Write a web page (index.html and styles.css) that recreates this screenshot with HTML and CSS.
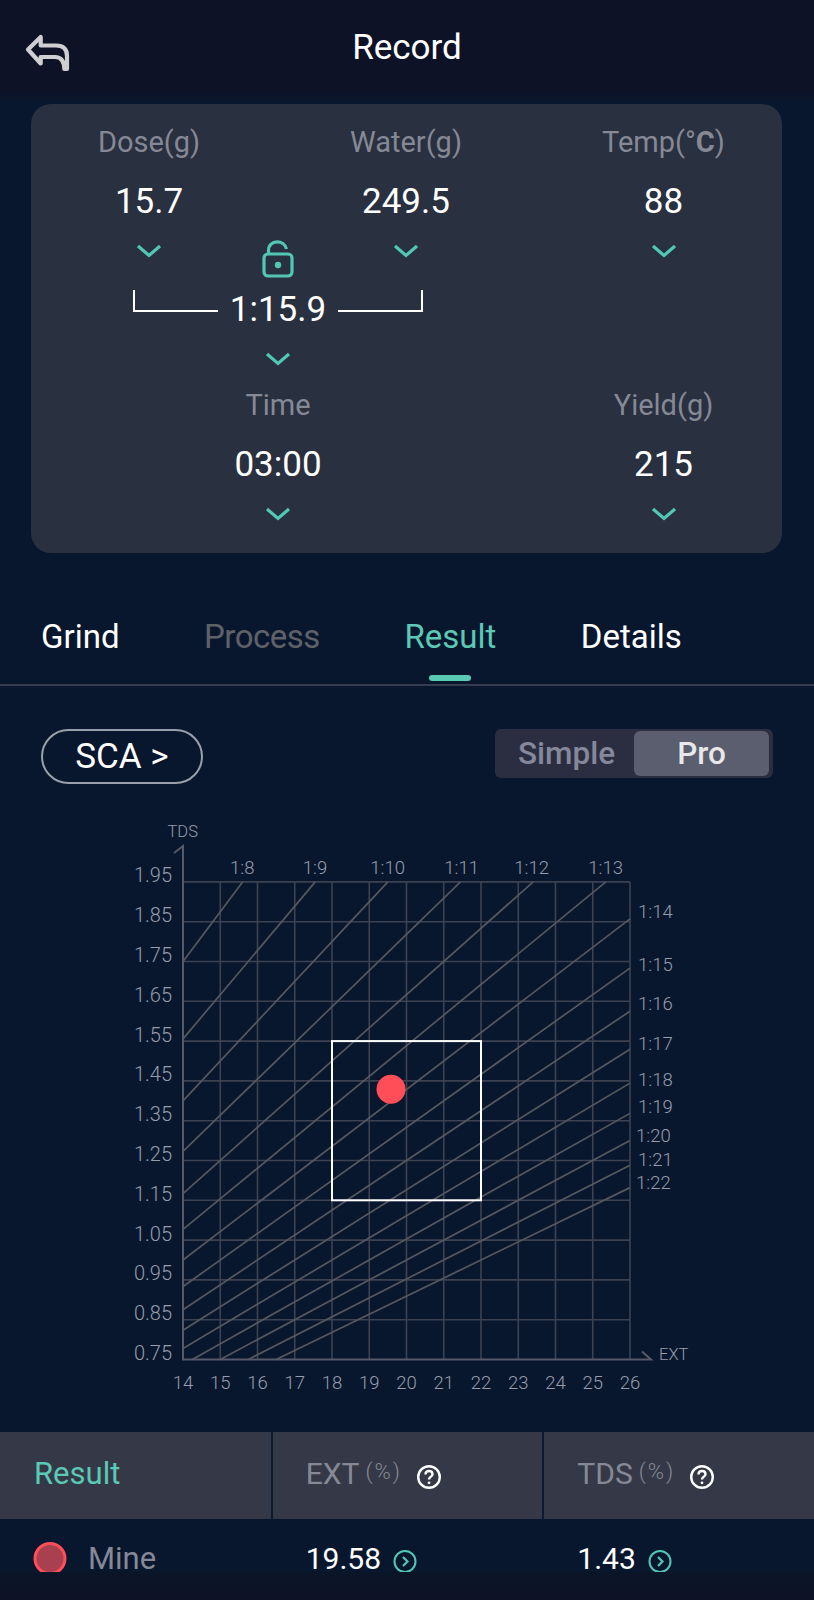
FILE: index.html
```html
<!DOCTYPE html>
<html lang="en">
<head>
  <meta charset="utf-8" />
  <title>Record</title>
  <link rel="stylesheet" href="styles.css">
</head>
<body>
  <header class="topbar">
    <svg class="back" width="50" height="44" viewBox="24 32 50 44">
      <path d="M28 49.500 40.700 37V45.500H56Q67 45.500 67 56V69H64.300Q64 57 55 57H40.700V63.500Z" />
    </svg>
    <h1 class="title">Record</h1>
  </header>

  <section class="card">
    <div class="row row-top">
      <div class="field">
        <div class="label">Dose(g)</div>
        <div class="value">15.7</div>
        <svg class="chev" width="26" height="14" viewBox="0 0 26 14"><path d="M2 2 13 11.5 24 2" /></svg>
      </div>
      <div class="field">
        <div class="label">Water(g)</div>
        <div class="value">249.5</div>
        <svg class="chev" width="26" height="14" viewBox="0 0 26 14"><path d="M2 2 13 11.5 24 2" /></svg>
      </div>
      <div class="field">
        <div class="label">Temp(°<span class="celsius">C</span>)</div>
        <div class="value">88</div>
        <svg class="chev" width="26" height="14" viewBox="0 0 26 14"><path d="M2 2 13 11.5 24 2" /></svg>
      </div>
    </div>

    <div class="ratio">
      <svg class="lock" width="32" height="38" viewBox="0 0 32 38">
        <path d="M6.5 13V10.500C6.500 5 10.500 1.800 15 1.800C19.500 1.800 23.500 4.500 24.500 9" />
        <rect x="2" y="14" width="28" height="22" rx="4" />
        <circle cx="16" cy="25" r="3.200" />
      </svg>
      <div class="bracket">
        <span class="bracket-left"></span>
        <span class="ratio-value">1:15.9</span>
        <span class="bracket-right"></span>
      </div>
      <svg class="chev" width="26" height="14" viewBox="0 0 26 14"><path d="M2 2 13 11.5 24 2" /></svg>
    </div>

    <div class="row row-bottom">
      <div class="field">
        <div class="label">Time</div>
        <div class="value">03:00</div>
        <svg class="chev" width="26" height="14" viewBox="0 0 26 14"><path d="M2 2 13 11.5 24 2" /></svg>
      </div>
      <div class="field">
        <div class="label">Yield(g)</div>
        <div class="value">215</div>
        <svg class="chev" width="26" height="14" viewBox="0 0 26 14"><path d="M2 2 13 11.5 24 2" /></svg>
      </div>
    </div>
  </section>

  <nav class="tabs">
    <a class="tab">Grind</a>
    <a class="tab tab-muted">Process</a>
    <a class="tab tab-active">Result</a>
    <a class="tab">Details</a>
  </nav>

  <div class="controls">
    <button class="sca">SCA &gt;</button>
    <div class="toggle">
      <span class="toggle-item">Simple</span>
      <span class="toggle-item toggle-on">Pro</span>
    </div>
  </div>

  <svg id="chart" class="chart" width="814" height="632" viewBox="0 800 814 632"></svg>

  <div class="result-head">
    <div class="cell cell-first">Result</div>
    <div class="cell">
      <span class="metric">EXT</span><span class="unit">(%)</span>
      <svg class="help" width="26" height="26" viewBox="0 0 26 26">
        <circle cx="13" cy="13" r="10.800" />
        <path d="M9.500 10.500C9.500 8.300 11 7 13 7C15 7 16.500 8.300 16.500 10.200C16.500 12.600 13 12.800 13 15.500" />
        <circle class="dot" cx="13" cy="18.800" r="1.400" />
      </svg>
    </div>
    <div class="cell">
      <span class="metric">TDS</span><span class="unit">(%)</span>
      <svg class="help" width="26" height="26" viewBox="0 0 26 26">
        <circle cx="13" cy="13" r="10.800" />
        <path d="M9.500 10.500C9.500 8.300 11 7 13 7C15 7 16.500 8.300 16.500 10.200C16.500 12.600 13 12.800 13 15.500" />
        <circle class="dot" cx="13" cy="18.800" r="1.400" />
      </svg>
    </div>
  </div>

  <div class="result-row">
    <div class="cell-row cell-first">
      <svg class="swatch" width="34" height="30" viewBox="0 0 34 30"><circle cx="17" cy="16.500" r="15" /></svg>
      <span class="mine">Mine</span>
    </div>
    <div class="cell-row">
      <span class="num">19.58</span>
      <svg class="go" width="24" height="22" viewBox="0 0 24 22"><circle cx="12" cy="11.500" r="10.500" /><path d="M10 7 14.500 11.500 10 16" /></svg>
    </div>
    <div class="cell-row">
      <span class="num">1.43</span>
      <svg class="go" width="24" height="22" viewBox="0 0 24 22"><circle cx="12" cy="11.500" r="10.500" /><path d="M10 7 14.500 11.500 10 16" /></svg>
    </div>
  </div>
  <div class="bottom-fade"></div>

  <script>
    // 차트 좌표: viewBox가 페이지 좌표와 같음
    const svg = document.getElementById('chart');
    const X0 = 183, Y0 = 1359.5, DX = 37.25, DY = 39.8;
    const px = ext => X0 + (ext - 14) * DX;
    const py = tds => Y0 - (tds - 0.75) * 10 * DY;

    function add(tag, attrs, text) {
      const el = document.createElementNS('http://www.w3.org/2000/svg', tag);
      for (const k in attrs) el.setAttribute(k, attrs[k]);
      if (text) el.textContent = text;
      svg.appendChild(el);
    }
    function line(x1, y1, x2, y2, cls) {
      add('line', {x1, y1, x2, y2, class: cls});
    }

    // 격자
    for (let e = 15; e <= 26; e++) line(px(e), py(1.95), px(e), Y0, 'grid');
    for (let i = 1; i <= 12; i++) line(X0, Y0 - i * DY, px(26), Y0 - i * DY, 'grid');

    // 비율선 TDS = EXT / r
    for (let r = 8; r <= 22; r++) {
      let e1 = 14, t1 = e1 / r, e2 = 26, t2 = e2 / r;
      if (t1 < 0.75) { t1 = 0.75; e1 = r * t1; }
      if (t2 > 1.95) { t2 = 1.95; e2 = r * t2; }
      line(px(e1), py(t1), px(e2), py(t2), 'diag');
    }

    // 축
    add('path', {d: `M174 853 183 846V${Y0}H651L642 1351.500`, class: 'axis'});

    // 눈금 글자
    for (let i = 0; i <= 12; i++) {
      add('text', {x: 172, y: Y0 - i * DY + 0.5, class: 'tick tick-y end'}, (0.75 + i * 0.1).toFixed(2));
      add('text', {x: px(14 + i), y: 1388.5, class: 'tick mid'}, String(14 + i));
    }
    [[8, 242.3], [9, 315], [10, 387.7], [11, 461.7], [12, 531.7], [13, 605.7]].forEach(([r, x]) => {
      add('text', {x, y: 873.5, class: 'tick mid'}, '1:' + r);
    });
    [[14, 638, 917.7], [15, 638, 970.7], [16, 638, 1010], [17, 638, 1050], [18, 638, 1085.7],
     [19, 638, 1113.3], [20, 636, 1141.7], [21, 638, 1165.7], [22, 636, 1189.3]].forEach(([r, x, y]) => {
      add('text', {x, y, class: 'tick'}, '1:' + r);
    });
    add('text', {x: 182.7, y: 836.7, class: 'axis-name mid'}, 'TDS');
    add('text', {x: 659, y: 1360, class: 'axis-name'}, 'EXT');

    // SCA 영역과 내 결과
    add('rect', {x: px(18), y: py(1.55), width: DX * 4, height: DY * 4, class: 'sca-box'});
    add('circle', {cx: 391, cy: 1089.3, r: 14.5, class: 'mine-dot'});
  </script>
</body>
</html>
```

FILE: styles.css
```css
* { box-sizing: border-box; }
html, body { margin: 0; padding: 0; }
body { width: 814px; height: 1600px; overflow: hidden; background: #09172e; color: #fff; font-family: Roboto, "Noto Sans", sans-serif; }

.topbar { height: 104px; padding-bottom: 8px; display: flex; align-items: center; justify-content: center; position: relative; background: linear-gradient(180deg, #0d1227 86%, #09172e 100%); }
.back { position: absolute; left: 24px; top: 32px; filter: blur(0.5px); }
.back path { fill: none; stroke: #cfcfd2; stroke-width: 4.2; stroke-linejoin: round; stroke-linecap: round; }
.title { margin: 0; font-size: 35px; font-weight: 400; line-height: 40px; }

.card { width: 751px; height: 449px; margin-left: 31px; padding-top: 20px; background: #29303f; border-radius: 20px; }
.row { display: grid; }
.row-top { grid-template-columns: 236px 278px 237px; }
.row-bottom { grid-template-columns: 494px 237px; justify-content: space-between; margin-top: 21px; }
.field { display: flex; flex-direction: column; align-items: center; }
.label { font-size: 29px; line-height: 36px; color: #858996; }
.celsius { font-weight: 700; }
.value { margin-top: 22px; font-size: 35px; line-height: 40px; }
.chev { display: block; fill: none; margin-top: 22px; }
.chev path { fill: none; stroke: #52c7b4; stroke-width: 3.2; }

.ratio { width: 290px; margin: -18px 0 0 102px; display: flex; flex-direction: column; align-items: center; }
.lock { display: block; }
.lock path, .lock rect { fill: none; stroke: #52c7b4; stroke-width: 3.2; }
.lock circle { fill: #52c7b4; }
.bracket { width: 100%; height: 40px; margin-top: 12px; display: flex; align-items: flex-end; justify-content: space-between; }
.bracket-left, .bracket-right { display: block; width: 85px; height: 22px; margin-bottom: 18px; border-bottom: 2px solid #fff; }
.bracket-left { border-left: 2px solid #fff; }
.bracket-right { border-right: 2px solid #fff; }
.ratio-value { font-size: 35px; line-height: 40px; }
.ratio .chev { margin-top: 22px; }

.tabs { height: 133px; padding: 64px 0 0 41px; display: flex; gap: 84.5px; border-bottom: 2px solid #373d50; }
.tab { font-size: 33px; line-height: 40px; position: relative; }
.tab-muted { color: #5e6168; letter-spacing: -0.5px; }
.tab-active { color: #5ac9b5; }
.tab-active::after { content: ""; position: absolute; left: 50%; top: 58px; width: 42px; height: 6px; margin-left: -21px; border-radius: 3px; background: #5ac9b5; }

.controls { height: 97px; padding: 43px 41px 0 41px; display: flex; justify-content: space-between; align-items: flex-start; }
.sca { width: 162px; height: 55px; border: 2px solid #9aa0aa; border-radius: 28px; background: transparent; color: #fff; font-family: inherit; font-size: 35px; font-weight: 400; padding: 0; }
.toggle { width: 278px; height: 49px; padding: 2px 4px; display: flex; background: #2b2e41; border-radius: 6px; }
.toggle-item { flex: 1; display: flex; align-items: center; justify-content: center; font-size: 31.5px; font-weight: 500; color: #85889a; }
.toggle-on { flex: 0 0 135px; background: #5a5e6e; color: #e8e8ea; border-radius: 6px; }

.chart { display: block; margin-top: 17px; }
.grid { stroke: #3d4252; stroke-width: 1.6; }
.diag { stroke: #56585f; stroke-width: 1.7; }
.axis { fill: none; stroke: #55596a; stroke-width: 2; }
.tick { font-family: Roboto, sans-serif; font-size: 18.5px; font-weight: 300; fill: #969cac; }
.tick-y { font-size: 20px; }
.axis-name { font-family: Roboto, sans-serif; font-size: 16.5px; font-weight: 300; fill: #969cac; }
.mid { text-anchor: middle; }
.end { text-anchor: end; }
.sca-box { fill: none; stroke: #fff; stroke-width: 2; }
.mine-dot { fill: #ff4e58; }

.result-head { height: 87px; display: flex; background: #353947; }
.cell { display: flex; align-items: center; width: 272px; padding: 0 0 4px 33px; border-left: 2px solid #0c1a30; }
.cell-first { width: 271px; border-left: 0; padding-left: 34px; font-size: 31px; color: #5ac9b5; }
.metric { font-size: 30px; color: #858996; }
.unit { margin: 0 0 4px 6px; font-size: 22px; font-weight: 300; letter-spacing: 2px; color: #858996; }
.help { margin: 7px 0 0 14px; fill: none; }
.help circle, .help path { fill: none; stroke: #fff; stroke-width: 2.4; }
.help .dot { fill: #fff; stroke: none; }

.result-row { height: 53px; display: flex; }
.cell-row { display: flex; align-items: flex-start; width: 272px; padding: 26px 0 0 35px; }
.cell-row.cell-first { width: 271px; padding-left: 33px; font-size: 30px; }
.swatch { display: block; margin-top: -3px; flex: none; }
.swatch circle { fill: #a8404f; stroke: #ff4e58; stroke-width: 3; }
.mine { margin-left: 21px; font-size: 31px; line-height: 28px; color: #858996; }
.num { font-size: 30px; line-height: 28px; }
.go { margin: 5px 0 0 12px; fill: none; flex: none; }
.go circle { fill: none; stroke: #52c7b4; stroke-width: 2; }
.go path { fill: none; stroke: #52c7b4; stroke-width: 2.2; }

.bottom-fade { height: 28px; background: linear-gradient(180deg, #0b1528 0%, #0d1227 100%); }
```
